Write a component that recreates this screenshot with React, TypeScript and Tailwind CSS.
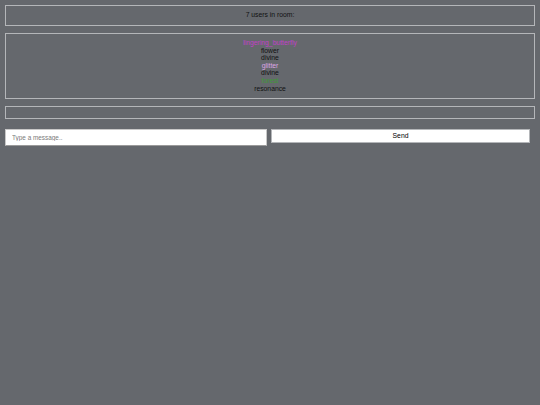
export default function App() {
  const users = [
    { name: "lingering_butterfly", color: "text-[#c13fc8]" },
    { name: "flower", color: "text-[#111111]" },
    { name: "divine", color: "text-[#111111]" },
    { name: "glitter", color: "text-[#dda6e6]" },
    { name: "divine", color: "text-[#111111]" },
    { name: "forest", color: "text-[#3f9a36]" },
    { name: "resonance", color: "text-[#111111]" },
  ];

  return (
    <div className="min-h-[405px] w-full bg-[#65686d] px-[5px] pt-[5px] font-['Liberation_Sans',Arial,sans-serif] text-[6.8px] text-[#111111]">
      <div className="flex flex-col gap-[7px]">
        <div className="flex h-[21px] items-center justify-center border border-[#b4b6b9]">
          7 users in room:
        </div>
        <div className="flex h-[66px] flex-col items-center border border-[#b4b6b9] pt-[5px] leading-[7.6px]">
          {users.map((u, i) => (
            <span key={i} className={u.color}>
              {u.name}
            </span>
          ))}
        </div>
        <div className="h-[13px] border border-[#b4b6b9]" />
      </div>
      <div className="mt-[10px] flex items-start gap-[4px] pr-[5px]">
        <input
          className="h-[17px] w-[262px] border border-[#c8c8c8] border-b-[#9a9a9a] bg-white px-[6px] text-[6.4px] text-[#111] outline-none placeholder:text-[#7a7a7a]"
          placeholder="Type a message.."
        />
        <button className="h-[14px] flex-1 border border-[#b4b6b9] bg-white text-[6.8px] leading-none text-black">
          Send
        </button>
      </div>
    </div>
  );
}
